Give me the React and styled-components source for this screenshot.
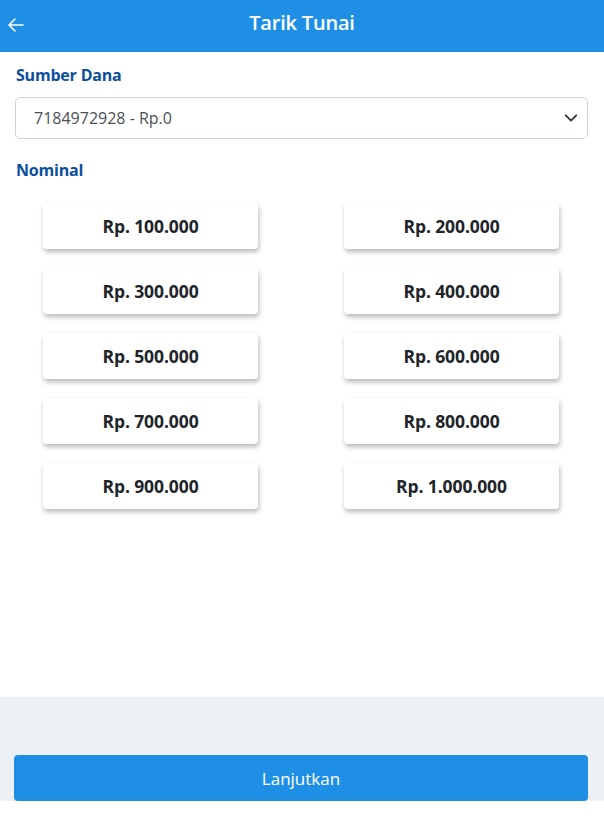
import React from "react";
import styled, { createGlobalStyle } from "styled-components";

const GlobalStyle = createGlobalStyle`
  html, body {
    margin: 0;
    padding: 0;
    background: #ffffff;
    font-family: "Open Sans", "Noto Sans", sans-serif;
  }
`;

const Page = styled.div`
  width: 604px;
  min-height: 824px;
  display: flex;
  flex-direction: column;
  background: #fff;
`;

const Header = styled.header`
  height: 52px;
  background: #1f8fe5;
  display: flex;
  align-items: center;
  justify-content: center;
  position: relative;
`;

const BackButton = styled.button`
  position: absolute;
  left: 6px;
  top: 15px;
  border: 0;
  background: transparent;
  padding: 0;
  display: flex;
  cursor: pointer;
`;

const Title = styled.h1`
  margin: 0 0 8px;
  color: #fff;
  font-size: 20px;
  font-weight: 600;
  letter-spacing: -0.2px;
`;

const Content = styled.main`
  padding: 12px 16px 0 15px;
  height: 645px;
  box-sizing: border-box;
`;

const Label = styled.div`
  color: #0b4f9e;
  font-size: 16px;
  font-weight: 700;
  padding-left: 1px;
  letter-spacing: -0.2px;
  margin-bottom: ${(p) => p.$gap || "11px"};
`;

const SelectBox = styled.div`
  height: 42px;
  border: 1px solid #ced4da;
  border-radius: 5px;
  box-sizing: border-box;
  display: flex;
  align-items: center;
  justify-content: space-between;
  padding: 0 9px 0 18px;
  color: #495057;
  font-size: 16px;
  margin-bottom: 20px;
`;

const Grid = styled.div`
  display: grid;
  grid-template-columns: 1fr 1fr;
  row-gap: 19px;
  margin: 0 -14px 0 -15px;
  padding-top: 22px;
  justify-items: center;
`;

const Amount = styled.button`
  width: 215px;
  height: 46px;
  border: 0;
  border-radius: 4px;
  background: #fff;
  box-shadow: 1px 3px 5px rgba(0, 0, 0, 0.28);
  font-family: inherit;
  font-size: 17.5px;
  font-weight: 700;
  color: #212529;
  letter-spacing: -0.1px;
  cursor: pointer;
`;

const Footer = styled.footer`
  background: #edf0f5;
  padding: 58px 16px 0 14px;
`;

const SubmitButton = styled.button`
  width: 100%;
  height: 46px;
  border: 0;
  border-radius: 4px;
  background: #1f8fe5;
  color: #fff;
  font-family: inherit;
  font-size: 17px;
  display: block;
`;

const amounts = [
  "Rp. 100.000",
  "Rp. 200.000",
  "Rp. 300.000",
  "Rp. 400.000",
  "Rp. 500.000",
  "Rp. 600.000",
  "Rp. 700.000",
  "Rp. 800.000",
  "Rp. 900.000",
  "Rp. 1.000.000",
];

export default function App() {
  return (
    <Page>
      <GlobalStyle />
      <Header>
        <BackButton aria-label="back">
          <svg width="20" height="20" viewBox="0 0 20 20" fill="none" stroke="#fff" strokeWidth="1.6" strokeLinecap="round" strokeLinejoin="round">
            <path d="M17 10H3M9 4L3 10l6 6" />
          </svg>
        </BackButton>
        <Title>Tarik Tunai</Title>
      </Header>
      <Content>
        <Label>Sumber Dana</Label>
        <SelectBox>
          <span>7184972928 - Rp.0</span>
          <svg width="14" height="14" viewBox="0 0 16 16" fill="none" stroke="#343a40" strokeWidth="2.2" strokeLinecap="round" strokeLinejoin="round">
            <path d="M2 5l6 6 6-6" />
          </svg>
        </SelectBox>
        <Label $gap="0">Nominal</Label>
        <Grid>
          {amounts.map((a) => (
            <Amount key={a}>{a}</Amount>
          ))}
        </Grid>
      </Content>
      <Footer>
        <SubmitButton>Lanjutkan</SubmitButton>
      </Footer>
    </Page>
  );
}
